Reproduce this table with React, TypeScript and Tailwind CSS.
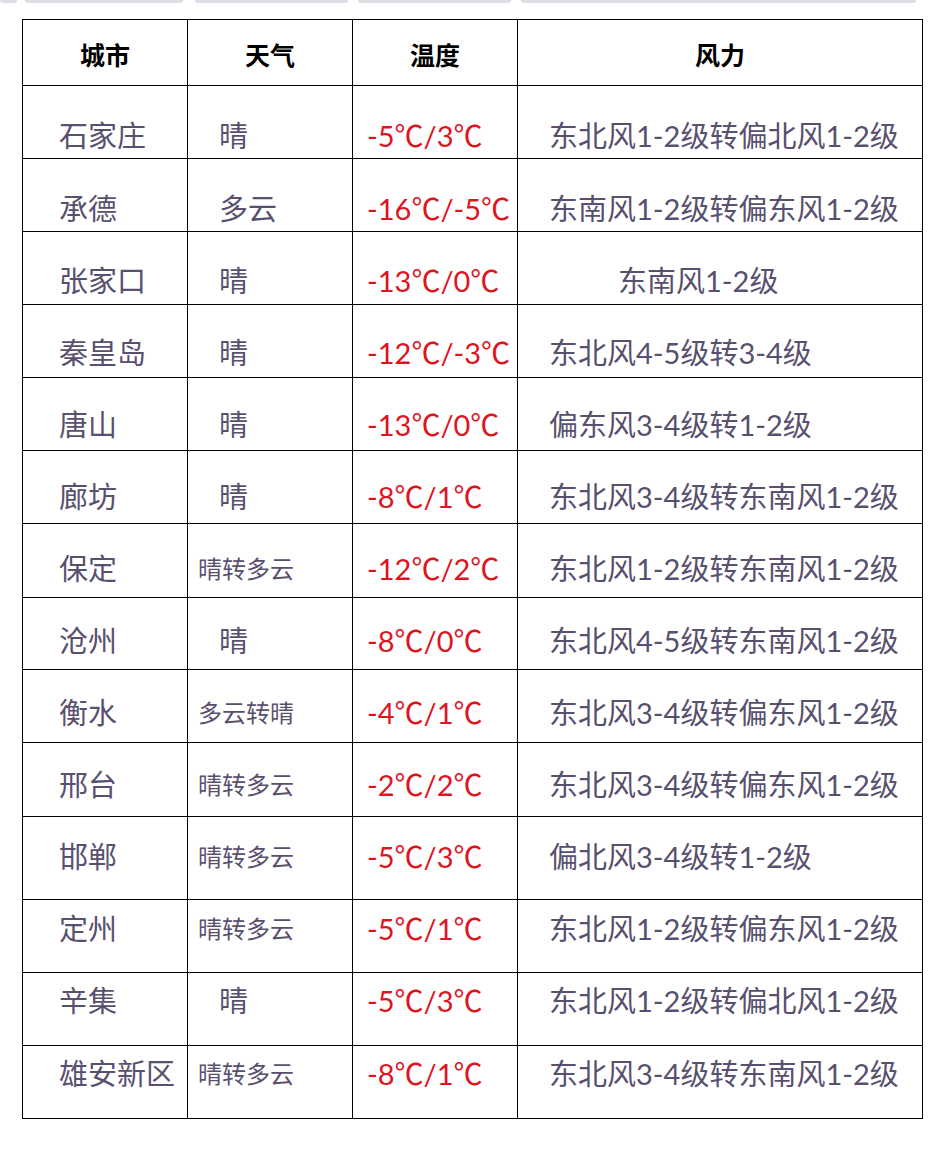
const rows = [
  { city: "石家庄", weather: "晴", temp: "-5℃/3℃", wind: "东北风1-2级转偏北风1-2级", h: "h-[73px]", pt: "pt-[35px]" },
  { city: "承德", weather: "多云", temp: "-16℃/-5℃", wind: "东南风1-2级转偏东风1-2级", h: "h-[73px]", pt: "pt-[35px]" },
  { city: "张家口", weather: "晴", temp: "-13℃/0℃", wind: "东南风1-2级", h: "h-[73px]", pt: "pt-[34px]", windPad: "pl-[100px]" },
  { city: "秦皇岛", weather: "晴", temp: "-12℃/-3℃", wind: "东北风4-5级转3-4级", h: "h-[73px]", pt: "pt-[33px]" },
  { city: "唐山", weather: "晴", temp: "-13℃/0℃", wind: "偏东风3-4级转1-2级", h: "h-[73px]", pt: "pt-[32px]" },
  { city: "廊坊", weather: "晴", temp: "-8℃/1℃", wind: "东北风3-4级转东南风1-2级", h: "h-[73px]", pt: "pt-[31px]" },
  { city: "保定", weather: "晴转多云", temp: "-12℃/2℃", wind: "东北风1-2级转东南风1-2级", h: "h-[74px]", pt: "pt-[30px]" },
  { city: "沧州", weather: "晴", temp: "-8℃/0℃", wind: "东北风4-5级转东南风1-2级", h: "h-[72px]", pt: "pt-[28px]" },
  { city: "衡水", weather: "多云转晴", temp: "-4℃/1℃", wind: "东北风3-4级转偏东风1-2级", h: "h-[73px]", pt: "pt-[28px]" },
  { city: "邢台", weather: "晴转多云", temp: "-2℃/2℃", wind: "东北风3-4级转偏东风1-2级", h: "h-[74px]", pt: "pt-[27px]" },
  { city: "邯郸", weather: "晴转多云", temp: "-5℃/3℃", wind: "偏北风3-4级转1-2级", h: "h-[83px]", pt: "pt-[25px]" },
  { city: "定州", weather: "晴转多云", temp: "-5℃/1℃", wind: "东北风1-2级转偏东风1-2级", h: "h-[73px]", pt: "pt-[14px]" },
  { city: "辛集", weather: "晴", temp: "-5℃/3℃", wind: "东北风1-2级转偏北风1-2级", h: "h-[73px]", pt: "pt-[13px]" },
  { city: "雄安新区", weather: "晴转多云", temp: "-8℃/1℃", wind: "东北风3-4级转东南风1-2级", h: "h-[73px]", pt: "pt-[13px]" },
];

const headers = ["城市", "天气", "温度", "风力"];

const font = "font-['Lato','Noto_Sans_CJK_SC',sans-serif]";

export default function App() {
  return (
    <div className="min-h-[1150px] w-[942px] bg-white">
      {/* faint strip of the page above */}
      <div className="flex h-[3px]">
        <div className="w-[17px] rounded-b-sm bg-[#dcdee6]" />
        <div className="ml-[8px] w-[158px] rounded-b-sm bg-[#dcdee6]" />
        <div className="ml-[12px] w-[153px] rounded-b-sm bg-[#dcdee6]" />
        <div className="ml-[10px] w-[153px] rounded-b-sm bg-[#dcdee6]" />
        <div className="ml-[10px] w-[395px] rounded-b-sm bg-[#dcdee6]" />
      </div>

      <div className={`ml-[22px] mt-[16px] grid w-fit grid-cols-[165px_165px_165px_405px] border-l border-t border-black ${font}`}>
        {headers.map((t) => (
          <div
            key={t}
            className="flex h-[66px] items-center justify-center border-b border-r border-black pt-[5px] font-['Noto_Sans_CJK_SC',sans-serif] text-[25px] font-bold text-black"
          >
            {t}
          </div>
        ))}

        {rows.map((r) => {
          const small = r.weather.length > 2;
          return (
            <div key={r.city} className="contents">
              <div className={`${r.h} ${r.pt} border-b border-r border-black pl-[36px] text-[29px] leading-[29px] text-[#58506e]`}>
                {r.city}
              </div>
              <div
                className={`${r.h} ${r.pt} border-b border-r border-black leading-[29px] text-[#58506e] ${
                  small ? "pl-[10px] text-[24px]" : "pl-[31px] text-[29px]"
                }`}
              >
                {r.weather}
              </div>
              <div className={`${r.h} ${r.pt} whitespace-nowrap border-b border-r border-black pl-[14px] text-[29px] leading-[29px] text-[#e0141e]`}>
                {r.temp}
              </div>
              <div
                className={`${r.h} ${r.pt} whitespace-nowrap border-b border-r border-black text-[29px] leading-[29px] text-[#58506e] ${
                  r.windPad ?? "pl-[31px]"
                }`}
              >
                {r.wind}
              </div>
            </div>
          );
        })}
      </div>
    </div>
  );
}
